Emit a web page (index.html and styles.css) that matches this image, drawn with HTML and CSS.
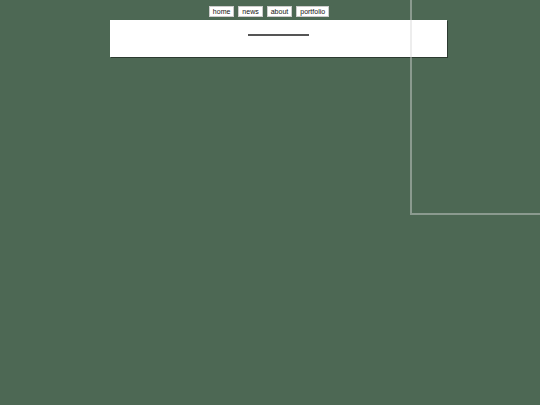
FILE: index.html
```html
<!DOCTYPE html>
<html lang="en">
<head>
    <meta charset="UTF-8">
    <meta name="viewport" content="width=device-width, initial-scale=1.0">
    <title>Home</title>
    <link rel="stylesheet" href="styles.css">
</head>
<body>
    <nav class="menu">
        <a href="#" class="menu-link">home</a>
        <a href="#" class="menu-link">news</a>
        <a href="#" class="menu-link">about</a>
        <a href="#" class="menu-link">portfolio</a>
    </nav>

    <main class="panel">
        <div class="rule"></div>
    </main>

    <!-- frame laid over the page -->
    <div class="frame"></div>
</body>
</html>
```

FILE: styles.css
```css
body {
    background-color: #4d6854;
    margin: 0;
    font-family: "Liberation Sans", Arial, sans-serif;
    min-height: 405px;
    position: relative;
    overflow: hidden;
}
.menu {
    display: flex;
    justify-content: center;
    gap: 4px;
    padding-top: 6px;
    margin-left: -2px;
}
.menu-link {
    display: block;
    background-color: white;
    color: #111;
    font-size: 7px;
    line-height: 9px;
    padding: 0 3px;
    border: 1px solid #ccc;
    text-decoration: none;
}
.panel {
    background-color: white;
    margin: 3px 0 0 110px;
    width: 337px;
    height: 37px;
    box-shadow: 1px 1px 0 #2c3a30;
    display: flex;
    justify-content: center;
}
.rule {
    width: 61px;
    height: 2px;
    margin-top: 14px;
    background-color: #555;
}
.frame {
    position: absolute;
    left: 410px;
    top: 0;
    right: 0;
    height: 213px;
    border-left: 2px solid rgba(215, 215, 215, 0.45);
    border-bottom: 2px solid rgba(215, 215, 215, 0.45);
}
```
